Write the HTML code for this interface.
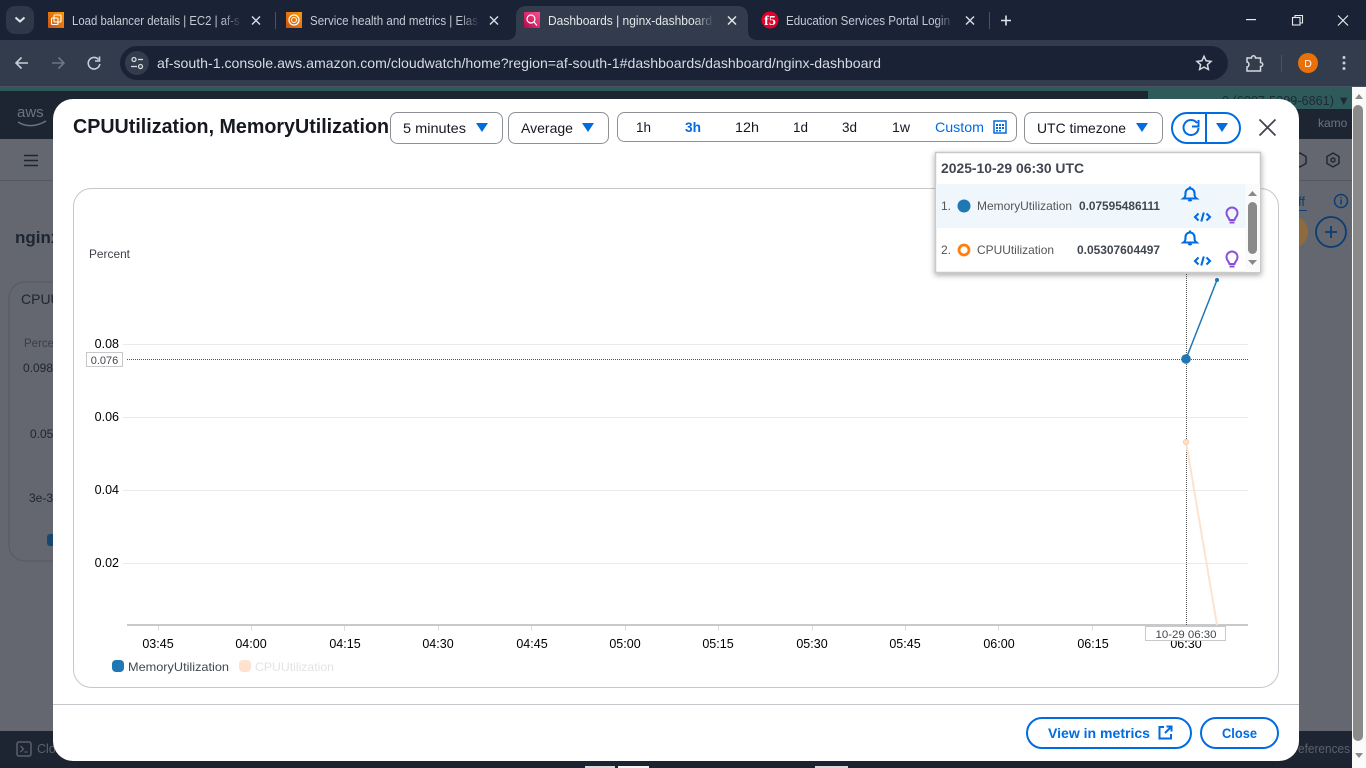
<!DOCTYPE html>
<html><head><meta charset="utf-8"><title>Dashboards | nginx-dashboard</title>
<style>
html,body{margin:0;padding:0;width:1366px;height:768px;overflow:hidden;background:#1b2230}
svg{display:block;position:absolute;left:0;top:0}
text{font-family:"Liberation Sans",sans-serif}
</style></head><body>
<svg width="1366" height="768" viewBox="0 0 1366 768" xmlns="http://www.w3.org/2000/svg">
<defs>
<linearGradient id="f1"><stop offset="0" stop-color="#1a2236" stop-opacity="0"/><stop offset="1" stop-color="#1a2236"/></linearGradient>
<linearGradient id="f2"><stop offset="0" stop-color="#333c4c" stop-opacity="0"/><stop offset="1" stop-color="#333c4c"/></linearGradient>
<linearGradient id="ora" x1="0" y1="1" x2="1" y2="0"><stop offset="0" stop-color="#c8511b"/><stop offset="1" stop-color="#ff9900"/></linearGradient>
<linearGradient id="pink" x1="0" y1="1" x2="1" y2="0"><stop offset="0" stop-color="#b0084d"/><stop offset="1" stop-color="#ff4f8b"/></linearGradient>
<filter id="sh" x="-10%" y="-10%" width="120%" height="125%"><feDropShadow dx="0" dy="2" stdDeviation="3" flood-color="#000" flood-opacity=".35"/></filter>
<clipPath id="c1"><rect x="0" y="0" width="240" height="40"/></clipPath>
<clipPath id="c2"><rect x="0" y="0" width="478" height="40"/></clipPath>
<clipPath id="c3"><rect x="0" y="0" width="712" height="40"/></clipPath>
<clipPath id="c4"><rect x="0" y="0" width="952" height="40"/></clipPath>
</defs>

<!-- browser chrome -->
<rect x="0" y="0" width="1366" height="40" fill="#1a2236"/>
<rect x="0" y="40" width="1366" height="47" fill="#333c4c"/>
<rect x="0" y="86" width="1366" height="1" fill="#4a5160"/>
<rect x="6" y="6" width="28" height="28" rx="9" fill="#2f3849"/>
<path d="M15.500 18.500l4.500 4 4.500-4" transform="translate(0,-1)" fill="none" stroke="#dfe3ea" stroke-width="2"/>

<!-- tab 1 -->
<rect x="48" y="12" width="16" height="16" fill="url(#ora)"/>
<g fill="none" stroke="#fff" stroke-width="1.100"><rect x="54" y="15" width="7" height="7" rx="1"/><rect x="51.500" y="18" width="6.500" height="6.500" rx="1"/></g>
<text x="72" y="25" font-size="12.500" fill="#c5cad3" clip-path="url(#c1)" textLength="174" lengthAdjust="spacingAndGlyphs">Load balancer details | EC2 | af-so</text>
<rect x="222" y="12" width="20" height="18" fill="url(#f1)"/>
<path d="M252 16.500l8 8m0-8l-8 8" stroke="#d5d9e0" stroke-width="1.500"/>
<rect x="275" y="12" width="1" height="17" fill="#4a5263"/>

<!-- tab 2 -->
<rect x="286" y="12" width="16" height="16" fill="url(#ora)"/>
<circle cx="294" cy="20" r="5" fill="none" stroke="#fff" stroke-width="1.200"/><circle cx="294" cy="20" r="2.500" fill="none" stroke="#fff" stroke-width="1"/>
<text x="310" y="25" font-size="12.500" fill="#c5cad3" clip-path="url(#c2)" textLength="168" lengthAdjust="spacingAndGlyphs">Service health and metrics | Elas</text>
<rect x="460" y="12" width="20" height="18" fill="url(#f1)"/>
<path d="M490 16.500l8 8m0-8l-8 8" stroke="#d5d9e0" stroke-width="1.500"/>

<!-- active tab -->
<path d="M506 40c7 0 10-3 10-10V16c0-6 4-10 10-10h212c6 0 10 4 10 10v14c0 7 3 10 10 10z" fill="#333c4c"/>
<rect x="524" y="12" width="16" height="16" fill="url(#pink)"/>
<circle cx="531" cy="19" r="4" fill="none" stroke="#fff" stroke-width="1.200"/><path d="M534 22l3 3.500" stroke="#fff" stroke-width="1.200"/>
<text x="548" y="25" font-size="12.500" fill="#e4e7ec" clip-path="url(#c3)" textLength="164" lengthAdjust="spacingAndGlyphs">Dashboards | nginx-dashboard</text>
<rect x="694" y="12" width="20" height="18" fill="url(#f2)"/>
<path d="M728 16.500l8 8m0-8l-8 8" stroke="#e4e7ec" stroke-width="1.500"/>

<!-- tab 4 -->
<circle cx="770" cy="20" r="8.500" fill="#e4002b"/>
<text x="770" y="25" text-anchor="middle" font-size="14" font-weight="bold" fill="#fff" style="font-family:'Liberation Serif',serif">f5</text>
<text x="786" y="25" font-size="12.500" fill="#c5cad3" clip-path="url(#c4)" textLength="164" lengthAdjust="spacingAndGlyphs">Education Services Portal Login</text>
<rect x="936" y="12" width="18" height="18" fill="url(#f1)"/>
<path d="M966 16.500l8 8m0-8l-8 8" stroke="#d5d9e0" stroke-width="1.500"/>
<rect x="989" y="12" width="1" height="17" fill="#4a5263"/>
<path d="M1006 15.500v10m-5-5h10" stroke="#dfe3ea" stroke-width="1.600"/>

<!-- window controls -->
<rect x="1246" y="19" width="10" height="1.200" fill="#e8eaee"/>
<g fill="none" stroke="#e8eaee" stroke-width="1.100"><rect x="1292.500" y="17.500" width="7.500" height="7.500"/><path d="M1295 17.500v-2h7.500v7.500h-2.500"/></g>
<path d="M1338 15.500l10 10m0-10l-10 10" stroke="#e8eaee" stroke-width="1.200"/>

<!-- toolbar -->
<path d="M28 63H16.500m5-5.500l-5.500 5.500 5.500 5.500" fill="none" stroke="#c9ced6" stroke-width="1.600"/>
<path d="M52 63h11.500m-5-5.500l5.500 5.500-5.500 5.500" fill="none" stroke="#6d7584" stroke-width="1.600"/>
<path d="M98.500 59.500a5.800 5.800 0 1 0 1.300 4.500" fill="none" stroke="#c9ced6" stroke-width="1.600"/><path d="M99.500 56.500v4.500h-4.500" fill="none" stroke="#c9ced6" stroke-width="1.600"/>
<rect x="120" y="46" width="1108" height="34" rx="17" fill="#1a2236"/>
<circle cx="137" cy="63" r="12" fill="#333c4c"/>
<g fill="none" stroke="#d5d9e0" stroke-width="1.300"><circle cx="134" cy="59.500" r="2"/><path d="M138 59.500h5"/><circle cx="140.500" cy="66.500" r="2"/><path d="M131 66.500h6"/></g>
<text x="157" y="68" font-size="14" fill="#d7dbe2" textLength="724" lengthAdjust="spacingAndGlyphs">af-south-1.console.aws.amazon.com/cloudwatch/home?region=af-south-1#dashboards/dashboard/nginx-dashboard</text>
<path d="M1204 56.300l2.100 4.500 4.900.6-3.600 3.300 1 4.800-4.400-2.400-4.400 2.400 1-4.800-3.600-3.300 4.900-.6z" fill="none" stroke="#d5d9e0" stroke-width="1.500"/>
<path d="M1247 58h4.500c0-3 4-3 4 0h5v4.500c3 0 3 4 0 4v4.500h-13.500v-4c2.500 0 2.500-5 0-5z" fill="none" stroke="#d5d9e0" stroke-width="1.500"/>
<rect x="1281" y="55" width="1" height="17" fill="#4a5263"/>
<circle cx="1308" cy="63" r="10" fill="#e8710a"/>
<text x="1308" y="67" text-anchor="middle" font-size="10.500" fill="#fff">D</text>
<g fill="#c9ced6"><circle cx="1344" cy="57.500" r="1.500"/><circle cx="1344" cy="63" r="1.500"/><circle cx="1344" cy="68.500" r="1.500"/></g>

<!-- page behind overlay -->
<rect x="0" y="87" width="1352" height="4" fill="#2e5a5b"/>
<rect x="0" y="91" width="1352" height="48" fill="#1e2532"/>
<rect x="1148" y="91" width="204" height="18" fill="#2e5a5b"/>
<text x="1222" y="105" font-size="13" fill="#1e2a33" textLength="128" lengthAdjust="spacingAndGlyphs">0 (6887-5299-6861) ▼</text>
<text x="1318" y="127" font-size="12" fill="#6b7280">kamo</text>
<text x="17" y="117" font-size="15" fill="#6b7280">aws</text>
<path d="M18 122c8 5 18 5 28-1" fill="none" stroke="#6b7280" stroke-width="1.500"/>
<rect x="0" y="139" width="1352" height="592" fill="#64676f"/>
<rect x="0" y="180" width="1352" height="1" fill="#565962"/>
<path d="M24 155.500h14M24 160.500h14M24 165.500h14" stroke="#1e2532" stroke-width="1.600"/>
<text x="15" y="243" font-size="17" font-weight="bold" fill="#1e2532">nginx</text>
<rect x="9" y="282" width="300" height="279" rx="16" fill="none" stroke="#565962"/>
<text x="21" y="304" font-size="14" fill="#20262f">CPUU</text>
<text x="24" y="347" font-size="11.500" fill="#3a3e46">Percent</text>
<text x="23" y="372" font-size="12" fill="#20262f">0.098</text>
<text x="30" y="438" font-size="12" fill="#20262f">0.05</text>
<text x="29" y="502" font-size="12" fill="#20262f">3e-3</text>
<rect x="47" y="534" width="12" height="12" rx="3" fill="#16486f"/>
<g fill="none" stroke="#1e2532" stroke-width="1.400"><path d="M1333 153l6 3.500v7l-6 3.500-6-3.500v-7z"/><circle cx="1333" cy="160" r="2"/><path d="M1300 153l6 3.500v7l-6 3.500-6-3.500v-7z"/></g>
<text x="1298" y="206" font-size="13" fill="#0a3e72">ff</text>
<rect x="1298" y="210" width="9" height="1" fill="#0a3e72"/>
<circle cx="1341" cy="201" r="6.500" fill="none" stroke="#0a3e72" stroke-width="1.500"/>
<path d="M1341 199.500v5M1341 197v1.300" stroke="#0a3e72" stroke-width="1.500"/>
<circle cx="1292" cy="232" r="16" fill="#8f6a3c"/>
<circle cx="1331" cy="232" r="15" fill="none" stroke="#0a3e72" stroke-width="1.800"/>
<path d="M1331 226v12m-6-6h12" stroke="#0a3e72" stroke-width="1.800"/>
<rect x="0" y="731" width="1352" height="30" fill="#1e2532"/>
<rect x="17" y="742" width="14" height="14" rx="2" fill="none" stroke="#5a606c" stroke-width="1.500"/>
<path d="M20.500 746l3 3-3 3m4 0h3" fill="none" stroke="#5a606c" stroke-width="1.300"/>
<text x="37" y="753" font-size="12.500" fill="#5a606c">Cloud</text>
<text x="1298" y="753" font-size="13" fill="#5a606c" textLength="52" lengthAdjust="spacingAndGlyphs">eferences</text>
<rect x="0" y="761" width="1352" height="7" fill="#1b2230"/>
<rect x="585" y="766" width="30" height="2" fill="#d8d8d8"/><rect x="618" y="766" width="31" height="2" fill="#f2f2f2"/><rect x="815" y="766" width="33" height="2" fill="#d8d8d8"/>

<!-- page scrollbar -->
<rect x="1352" y="87" width="14" height="681" fill="#fafafa"/>
<path d="M1355 99l4-5 4 5z" fill="#8a8a8a"/>
<rect x="1353" y="105" width="10" height="636" rx="5" fill="#8a8a8a"/>
<path d="M1355 753l4 5 4-5z" fill="#8a8a8a"/>

<!-- modal -->
<rect x="53" y="99" width="1246" height="662" rx="20" fill="#fff"/>
<text x="73" y="133" font-size="20" font-weight="bold" fill="#16191f" textLength="316" lengthAdjust="spacingAndGlyphs">CPUUtilization, MemoryUtilization</text>

<!-- selectors -->
<g fill="#fff" stroke="#8d9196" stroke-width="1"><rect x="390.500" y="112.500" width="112" height="31" rx="7"/><rect x="508.500" y="112.500" width="100" height="31" rx="7"/><rect x="617.500" y="112.500" width="399" height="29" rx="7"/><rect x="1024.500" y="112.500" width="138" height="31" rx="7"/></g>
<g font-size="14" fill="#16191f">
<text x="403" y="133" textLength="63" lengthAdjust="spacingAndGlyphs">5 minutes</text>
<text x="521" y="133" textLength="52" lengthAdjust="spacingAndGlyphs">Average</text>
<text x="636" y="132" textLength="15" lengthAdjust="spacingAndGlyphs">1h</text>
<text x="735" y="132" textLength="24" lengthAdjust="spacingAndGlyphs">12h</text>
<text x="793" y="132" textLength="15" lengthAdjust="spacingAndGlyphs">1d</text>
<text x="842" y="132" textLength="15" lengthAdjust="spacingAndGlyphs">3d</text>
<text x="892" y="132" textLength="18" lengthAdjust="spacingAndGlyphs">1w</text>
<text x="1037" y="133" textLength="89" lengthAdjust="spacingAndGlyphs">UTC timezone</text>
</g>
<text x="685" y="132" font-size="14" font-weight="bold" fill="#006ce0" textLength="16" lengthAdjust="spacingAndGlyphs">3h</text>
<text x="935" y="132" font-size="14" fill="#006ce0" textLength="49" lengthAdjust="spacingAndGlyphs">Custom</text>
<g fill="#006ce0"><path d="M476 123h12l-6 9zM582 123h12l-6 9zM1136 123h12l-6 9z"/></g>
<g fill="none" stroke="#006ce0"><rect x="994" y="121" width="12" height="12" stroke-width="1.500"/></g>
<g fill="#006ce0"><rect x="996" y="124" width="2" height="2"/><rect x="999" y="124" width="2" height="2"/><rect x="1002" y="124" width="2" height="2"/><rect x="996" y="127" width="2" height="2"/><rect x="999" y="127" width="2" height="2"/><rect x="1002" y="127" width="2" height="2"/><rect x="996" y="130" width="2" height="1.500"/><rect x="999" y="130" width="2" height="1.500"/></g>

<!-- refresh -->
<rect x="1172" y="113" width="68" height="30" rx="15" fill="#fff" stroke="#006ce0" stroke-width="2"/>
<rect x="1205" y="113" width="2" height="30" fill="#006ce0"/>
<path d="M1216 123h12l-6 9z" fill="#006ce0"/>
<path d="M1197 123a7.500 7.500 0 1 0 1.500 5" fill="none" stroke="#006ce0" stroke-width="2"/>
<path d="M1198.500 120v6.500h-6.500" fill="none" stroke="#006ce0" stroke-width="2"/>
<path d="M1259.500 119.500l16 16m0-16l-16 16" stroke="#414750" stroke-width="1.800"/>

<!-- chart frame -->
<rect x="73.500" y="188.500" width="1205" height="499" rx="18" fill="#fff" stroke="#c6c6cd"/>
<text x="89" y="258" font-size="11.500" fill="#3c4048" textLength="41" lengthAdjust="spacingAndGlyphs">Percent</text>
<g stroke="#e9ebed"><path d="M123 344.500h1125M123 417.500h1125M123 490.500h1125M123 563.500h1125"/></g>
<g font-size="12.500" fill="#000" text-anchor="end"><text x="119" y="348">0.08</text><text x="119" y="421">0.06</text><text x="119" y="494">0.04</text><text x="119" y="567">0.02</text></g>
<rect x="127" y="624" width="1121" height="2" fill="#c9c9c9"/>
<g stroke="#dedede"><path d="M158.500 626v5M251.500 626v5M344.500 626v5M438.500 626v5M531.500 626v5M625.500 626v5M718.500 626v5M812.500 626v5M905.500 626v5M998.500 626v5M1092.500 626v5M1186.500 626v5"/></g>
<g font-size="12.500" fill="#000" text-anchor="middle">
<text x="158" y="648">03:45</text><text x="251" y="648">04:00</text><text x="345" y="648">04:15</text><text x="438" y="648">04:30</text><text x="532" y="648">04:45</text><text x="625" y="648">05:00</text><text x="718" y="648">05:15</text><text x="812" y="648">05:30</text><text x="905" y="648">05:45</text><text x="999" y="648">06:00</text><text x="1093" y="648">06:15</text><text x="1186" y="648">06:30</text>
</g>
<rect x="112" y="660" width="12" height="12" rx="4" fill="#1f77b4"/>
<text x="128" y="671" font-size="12" fill="#414750" textLength="101" lengthAdjust="spacingAndGlyphs">MemoryUtilization</text>
<rect x="239" y="660" width="12" height="12" rx="4" fill="#fde3cf"/>
<text x="255" y="671" font-size="12" fill="#e3e3e3" textLength="79" lengthAdjust="spacingAndGlyphs">CPUUtilization</text>

<!-- hover lines and data -->
<path d="M127 359.500h1121" stroke="#555" stroke-dasharray="1 1"/>
<path d="M1186.500 272v353" stroke="#555" stroke-dasharray="1 1"/>
<path d="M1186 442L1217 625" stroke="#fde3cf" stroke-width="2" fill="none"/>
<circle cx="1186" cy="442" r="2.500" fill="#fde3cf" stroke="#f7c9a0"/>
<path d="M1186 359L1217 280" stroke="#1f77b4" stroke-width="1.500" fill="none"/>
<circle cx="1217" cy="280" r="2" fill="#1f77b4"/>
<circle cx="1186" cy="359" r="4.800" fill="#1f77b4"/>
<rect x="86.500" y="352.500" width="36" height="14" fill="#fff" stroke="#c9c9c9"/>
<text x="104.500" y="364" font-size="11" fill="#414750" text-anchor="middle">0.076</text>
<rect x="1145.500" y="626.500" width="80" height="14" fill="#fff" stroke="#c9c9c9"/>
<text x="1186" y="638" font-size="11" fill="#414750" text-anchor="middle" textLength="61" lengthAdjust="spacingAndGlyphs">10-29 06:30</text>

<!-- tooltip -->
<rect x="935.500" y="152.500" width="325" height="120" fill="#fff" stroke="#c9c9c9" stroke-width="1.500" filter="url(#sh)"/>
<text x="941" y="173" font-size="14" font-weight="bold" fill="#424650" textLength="143" lengthAdjust="spacingAndGlyphs">2025-10-29 06:30 UTC</text>
<rect x="936" y="184" width="309" height="44" fill="#eff7fd"/>
<rect x="1245" y="184" width="15" height="88" fill="#fafafa"/>
<path d="M1248 196l4.500-5 4.500 5z" fill="#8a8a8a"/>
<rect x="1248" y="202" width="9" height="52" rx="4.500" fill="#8a8a8a"/>
<path d="M1248 260l4.500 5 4.500-5z" fill="#8a8a8a"/>
<g font-size="12" fill="#555"><text x="941" y="210">1.</text><text x="941" y="254">2.</text></g>
<circle cx="964" cy="206" r="6.500" fill="#1f77b4"/>
<circle cx="964" cy="250" r="5" fill="#fff" stroke="#ff7f0e" stroke-width="2.800"/>
<text x="977" y="210" font-size="12" fill="#555" textLength="95" lengthAdjust="spacingAndGlyphs">MemoryUtilization</text>
<text x="977" y="254" font-size="12" fill="#555" textLength="77" lengthAdjust="spacingAndGlyphs">CPUUtilization</text>
<g font-size="12" font-weight="bold" fill="#414750"><text x="1079" y="210" textLength="81" lengthAdjust="spacingAndGlyphs">0.07595486111</text><text x="1077" y="254" textLength="83" lengthAdjust="spacingAndGlyphs">0.05307604497</text></g>
<g fill="none" stroke="#006ce0" stroke-width="2.100">
<path d="M1183.500 198.500c2-1.500 2-3 2-5.500a4.500 4.500 0 0 1 9 0c0 2.500 0 4 2 5.500zm5 1.200a1.800 1.800 0 0 0 3 0M1190 186.500v2"/>
<path d="M1183.500 242.500c2-1.500 2-3 2-5.500a4.500 4.500 0 0 1 9 0c0 2.500 0 4 2 5.500zm5 1.200a1.800 1.800 0 0 0 3 0M1190 230.500v2"/>
<path d="M1198.500 213.500l-3.500 3.500 3.500 3.500M1206.500 213.500l3.500 3.500-3.500 3.500M1203.800 212.500l-2.500 9"/>
<path d="M1198.500 257.500l-3.500 3.500 3.500 3.500M1206.500 257.500l3.500 3.500-3.500 3.500M1203.800 256.500l-2.500 9"/>
</g>
<g fill="none" stroke="#8a50d8" stroke-width="2">
<path d="M1229.500 220c-.5-2.500-3-3.500-3-7a5.500 5.500 0 0 1 11 0c0 3.500-2.500 4.500-3 7zm0 2.500h5"/>
<path d="M1229.500 264c-.5-2.500-3-3.500-3-7a5.500 5.500 0 0 1 11 0c0 3.500-2.500 4.500-3 7zm0 2.500h5"/>
</g>

<!-- footer -->
<rect x="53" y="704" width="1246" height="1" fill="#c6c6cd"/>
<rect x="1027" y="718" width="164" height="30" rx="15" fill="#fff" stroke="#006ce0" stroke-width="2"/>
<rect x="1201" y="718" width="77" height="30" rx="15" fill="#fff" stroke="#006ce0" stroke-width="2"/>
<text x="1048" y="738" font-size="14" font-weight="bold" fill="#006ce0" textLength="102" lengthAdjust="spacingAndGlyphs">View in metrics</text>
<text x="1222" y="738" font-size="14" font-weight="bold" fill="#006ce0" textLength="35" lengthAdjust="spacingAndGlyphs">Close</text>
<path d="M1164 727h-4.500v11.500h11.500V734" fill="none" stroke="#006ce0" stroke-width="2"/>
<path d="M1165 733l6-6m-4.500-.5h5v5" fill="none" stroke="#006ce0" stroke-width="2"/>
</svg>
</body></html>
